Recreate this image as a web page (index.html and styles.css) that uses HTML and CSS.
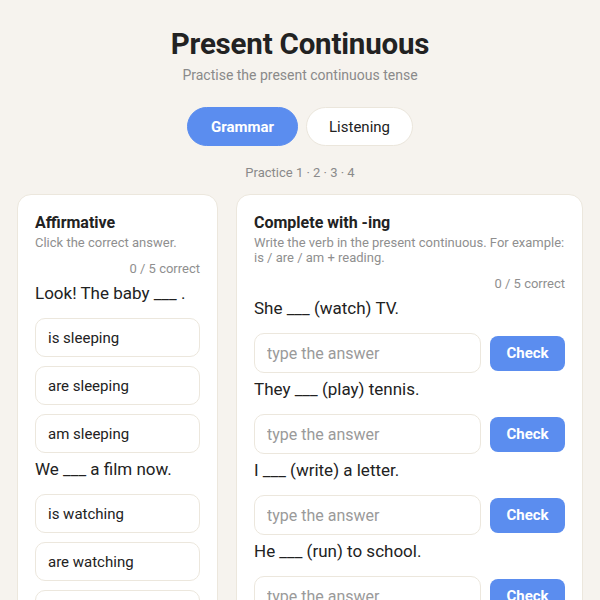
FILE: index.html
```html
<!DOCTYPE html>
<html lang="en">
<head>
<meta charset="utf-8">
<title>Present Continuous</title>
<link rel="stylesheet" href="styles.css">
</head>
<body>
<div class="page">
  <header class="header">
    <h1 class="title">Present Continuous</h1>
    <p class="subtitle">Practise the present continuous tense</p>
    <nav class="tabs">
      <button class="tab tab-active">Grammar</button>
      <button class="tab">Listening</button>
    </nav>
    <p class="practice">Practice 1 · 2 · 3 · 4</p>
  </header>

  <main class="cards">
    <section class="card">
      <h2 class="card-title">Affirmative</h2>
      <p class="card-desc">Click the correct answer.</p>
      <p class="counter">0 / 5 correct</p>

      <p class="question">Look! The baby ___ .</p>
      <div class="options">
        <button class="option">is sleeping</button>
        <button class="option">are sleeping</button>
        <button class="option">am sleeping</button>
      </div>

      <p class="question">We ___ a film now.</p>
      <div class="options">
        <button class="option">is watching</button>
        <button class="option">are watching</button>
        <button class="option">am watching</button>
      </div>
    </section>

    <section class="card">
      <h2 class="card-title">Complete with -ing</h2>
      <p class="card-desc">Write the verb in the present continuous. For example: is / are / am + reading.</p>
      <p class="counter">0 / 5 correct</p>

      <p class="question">She ___ (watch) TV.</p>
      <div class="answer-row">
        <input class="answer" type="text" placeholder="type the answer">
        <button class="check">Check</button>
      </div>

      <p class="question">They ___ (play) tennis.</p>
      <div class="answer-row">
        <input class="answer" type="text" placeholder="type the answer">
        <button class="check">Check</button>
      </div>

      <p class="question">I ___ (write) a letter.</p>
      <div class="answer-row">
        <input class="answer" type="text" placeholder="type the answer">
        <button class="check">Check</button>
      </div>

      <p class="question">He ___ (run) to school.</p>
      <div class="answer-row">
        <input class="answer" type="text" placeholder="type the answer">
        <button class="check">Check</button>
      </div>
    </section>
  </main>
</div>
</body>
</html>
```

FILE: styles.css
```css
* {
  box-sizing: border-box;
}

html, body {
  margin: 0;
  padding: 0;
  background: #f6f3ee;
  font-family: Roboto, "Noto Sans", "Liberation Sans", sans-serif;
  color: #222222;
}

.page {
  padding: 26px 17px 40px;
}

.header {
  display: flex;
  flex-direction: column;
  align-items: center;
}

.title {
  margin: 0;
  font-size: 29.5px;
  line-height: 36px;
  font-weight: 700;
  color: #222222;
  letter-spacing: -0.2px;
}

.subtitle {
  margin: 4px 0 0;
  font-size: 14px;
  line-height: 18px;
  color: #8a8a8a;
}

.tabs {
  display: flex;
  gap: 8px;
  margin-top: 23px;
}

.tab {
  height: 39px;
  padding: 0 22px;
  border-radius: 20px;
  border: 1px solid #ebe6dc;
  background: #ffffff;
  font-family: inherit;
  font-size: 15px;
  color: #222222;
}

.tab-active {
  background: #5b8def;
  border-color: #5b8def;
  color: #ffffff;
  font-weight: 700;
  padding: 0 23px;
}

.practice {
  margin: 18px 0 0;
  font-size: 13px;
  line-height: 18px;
  color: #8a8a8a;
}

.cards {
  display: grid;
  grid-template-columns: 201px minmax(0, 1fr);
  gap: 18px;
  margin-top: 12px;
  align-items: start;
}

.card {
  background: #ffffff;
  border: 1px solid #ece7dd;
  border-radius: 14px;
  padding: 18px 17px 18px;
}

.card-title {
  margin: 0;
  font-size: 16px;
  line-height: 19px;
  font-weight: 700;
  color: #222222;
}

.card-desc {
  margin: 3px 0 0;
  font-size: 13px;
  line-height: 15px;
  color: #8f8f8f;
}

.counter {
  margin: 11px 0 0;
  text-align: right;
  font-size: 13px;
  line-height: 16px;
  color: #8f8f8f;
}

.question {
  margin: 5px 0 14px;
  font-size: 17px;
  line-height: 22px;
  color: #222222;
}

.options {
  display: flex;
  flex-direction: column;
  gap: 9px;
}

.option {
  height: 39px;
  padding: 0 12px;
  text-align: left;
  border: 1px solid #ece7dd;
  border-radius: 10px;
  background: #ffffff;
  font-family: inherit;
  font-size: 15px;
  color: #222222;
}

.answer-row {
  display: flex;
  align-items: center;
  gap: 9px;
}

.answer {
  flex: 1;
  min-width: 0;
  height: 40px;
  padding: 0 12px;
  border: 1px solid #ece7dd;
  border-radius: 10px;
  background: #ffffff;
  font-family: inherit;
  font-size: 16px;
  color: #222222;
}

.answer::placeholder {
  color: #9a9a9a;
}

.check {
  width: 75px;
  height: 35px;
  border: none;
  border-radius: 8px;
  background: #5b8def;
  color: #ffffff;
  font-family: inherit;
  font-size: 15px;
  font-weight: 700;
}
```
